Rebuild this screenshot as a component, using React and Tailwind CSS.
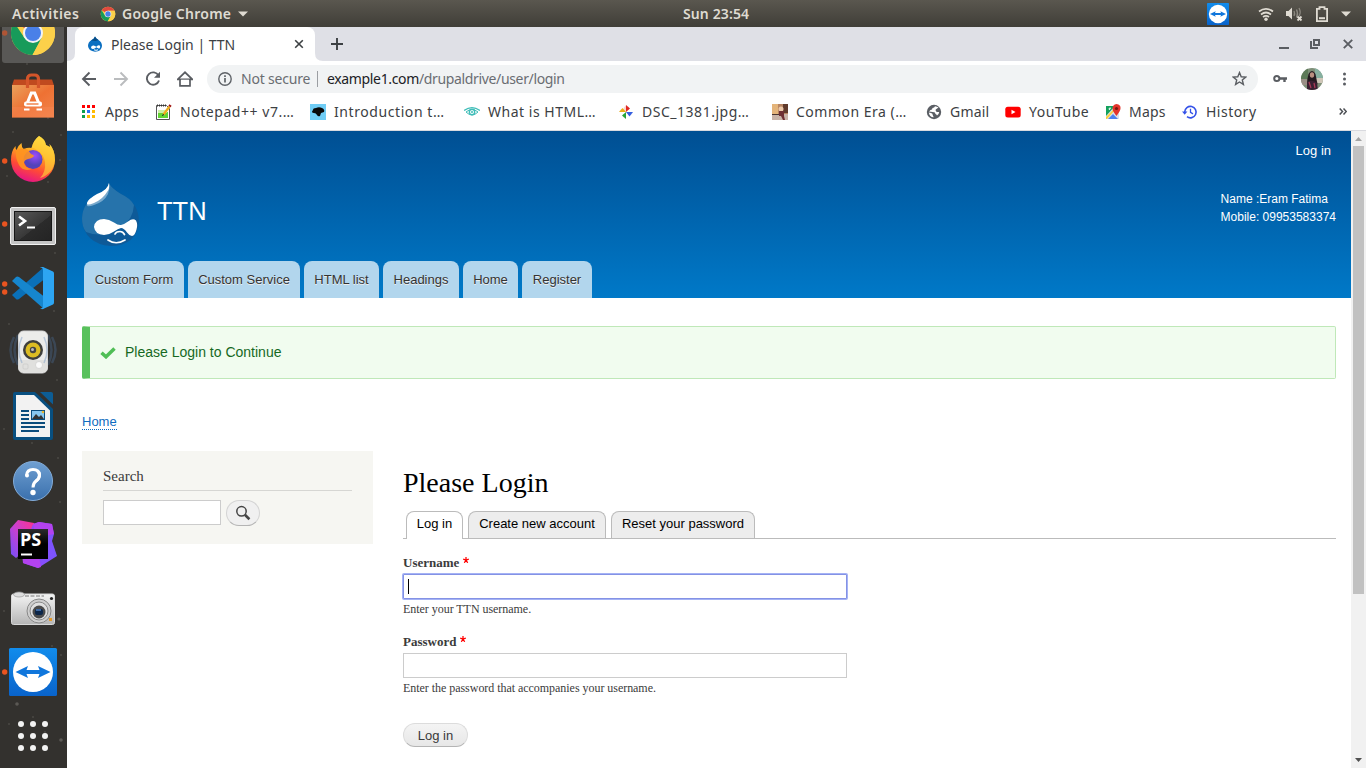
import React from "react";

const ui = "font-['Noto_Sans',sans-serif]";
const sans = "font-['Liberation_Sans',sans-serif]";
const serif = "font-['Liberation_Serif',serif]";

function ChromeLogo({ className }) {
  return (
    <svg viewBox="0 0 48 48" className={className}>
      <circle cx="24" cy="24" r="22" fill="#fcd04a" />
      <path d="M24 24 4.9 13 A22 22 0 0 1 43.1 13 L44 14.500H24z" fill="#e04a3f" />
      <path d="M4.900 13 A22 22 0 0 0 23.500 46 L33 29 24 24 15.500 29z" fill="#179b5a" />
      <path d="M24 14H43.600A22 22 0 0 1 23.500 46L32.500 29z" fill="#fcd04a" />
      <circle cx="24" cy="24" r="10" fill="#f3f3f3" />
      <circle cx="24" cy="24" r="8" fill="#4a80e8" />
    </svg>
  );
}

function TeamViewer({ className }) {
  return (
    <svg viewBox="0 0 48 48" className={className}>
      <defs>
        <linearGradient id="tv" x1="0" y1="0" x2="0" y2="1">
          <stop offset="0" stopColor="#118cec" />
          <stop offset="1" stopColor="#0963cb" />
        </linearGradient>
      </defs>
      <rect width="48" height="48" rx="1.500" fill="url(#tv)" />
      <circle cx="24" cy="24" r="20" fill="#fff" />
      <path d="M6.500 24 19 18l-1.500 4h13L29 18l12.500 6L29 30l1.500-4h-13L19 30z" fill="#0f76dc" />
    </svg>
  );
}

function TopBar() {
  return (
    <header className={`${ui} flex h-[27px] items-center bg-linear-to-b from-[#5a574f] to-[#403e38] text-[14px] font-semibold text-[#dfdbd2]`}>
      <div className="flex w-[683px] items-center pl-3">
        <span className="w-[88px] tracking-[0.500px] whitespace-nowrap">Activities</span>
        <ChromeLogo className="h-4 w-4" />
        <span className="ml-[6px] w-[111px] tracking-[0.260px] whitespace-nowrap">Google Chrome</span>
        <svg className="ml-[5px] h-[6px] w-[10px]" viewBox="0 0 10 6"><path d="M0 .5h10L5 5.500z" fill="#dfdbd2" /></svg>
      </div>
      <div className="tracking-[0.120px] whitespace-nowrap">Sun 23:54</div>
      <div className="flex flex-1 items-center justify-end pr-[15px]">
        <TeamViewer className="mr-[29px] h-[22px] w-[22px]" />
        <svg className="mr-[11px] h-4 w-4" viewBox="0 0 16 16" fill="none" stroke="#dfdbd2" strokeWidth="1.700">
          <path d="M1 5.500Q8 .2 15 5.500M3 8.500Q8 4.500 13 8.500M5 11Q8 8.600 11 11" /><circle cx="8" cy="13.200" r="1.700" fill="#dfdbd2" stroke="none" />
        </svg>
        <svg className="mr-[13px] h-4 w-[18px]" viewBox="0 0 18 16">
          <path d="M1 5h2.500L7 1.500v12L3.500 10H1z" fill="#dfdbd2" />
          <path d="M9 5q1.200 2.500 0 5M11.500 3.500q2 4 0 8M14 2q2.500 4.500 0 8" stroke="#8c8980" fill="none" strokeWidth="1.300" />
          <path d="m12.500 10.500 4 4m0-4-4 4" stroke="#dfdbd2" strokeWidth="1.800" />
        </svg>
        <svg className="mr-[13px] h-4 w-3" viewBox="0 0 12 16" fill="none" stroke="#dfdbd2" strokeWidth="1.800">
          <path d="M3.500 1.200h5v1.600h2.600v12.300H.9V2.800h2.600z" /><path d="M3 12.200h6" strokeWidth="2" />
        </svg>
        <svg className="h-[6px] w-[10px]" viewBox="0 0 10 6"><path d="M0 .5h10L5 5.500z" fill="#dfdbd2" /></svg>
      </div>
    </header>
  );
}

const icon = "h-12 w-12 overflow-visible";

const dock = [
  { dots: [24], active: true, el: <ChromeLogo className={icon} /> },
  {
    el: (
      <svg viewBox="0 0 48 48" className={icon}>
        <defs><linearGradient id="bag" x1="0" y1="0" x2="1" y2="1"><stop stopColor="#eaa15c" /><stop offset=".5" stopColor="#ee7133" /><stop offset="1" stopColor="#f2844c" /></linearGradient></defs>
        <path d="M5 6.500h38l2 6H3z" fill="#c04a1f" />
        <path d="M3 12h42v32.500H3z" fill="url(#bag)" />
        <path d="M3 34h42v10.500H3z" fill="#f58552" opacity=".5" />
        <path d="M18.500 15V6q0-4 4-4h3q4 0 4 4v9" fill="none" stroke="#d4552a" strokeWidth="3.200" />
        <path d="M17.500 32l4.800-12h3.400L30.500 32" fill="none" stroke="#fff" strokeWidth="3" />
        <rect x="15" y="28.500" width="18" height="5" rx="2" fill="#fff" />
        <path d="M17.500 31h12" stroke="#ee7133" strokeWidth="1.300" />
        <path d="M15 36.500h5.500M27.500 36.500h5.500" stroke="#fff" strokeWidth="2.200" />
      </svg>
    ),
  },
  {
    dots: [24],
    el: (
      <svg viewBox="0 0 48 48" className={icon}>
        <defs>
          <linearGradient id="ff" x1=".7" y1="0" x2=".35" y2="1"><stop stopColor="#fff04a" /><stop offset=".4" stopColor="#ffa51f" /><stop offset=".7" stopColor="#ff4b35" /><stop offset="1" stopColor="#e51289" /></linearGradient>
          <radialGradient id="fg" cx=".6" cy=".3"><stop stopColor="#9b4bff" /><stop offset="1" stopColor="#5443b9" /></radialGradient>
        </defs>
        <path d="M30-1q6 3 7 9l4 2q0-2-.5-3Q46 13 46 23A22 22 0 0 1 2 23Q2 14 6.500 9q0 3 1 4 2-5 5-7 0 4 2 6 5-2 8-1 2-8 7.500-12z" fill="url(#ff)" />
        <circle cx="24" cy="22.500" r="9.500" fill="url(#fg)" />
        <path d="M7 13q7-3 12 0l3 4q3 1 3 2-1 2-6 3-4 1-4 4 1 5 8 6-9 3-13-4-4-7-3-15z" fill="#ff9420" opacity=".9" />
        <path d="M30-1q6 3 7 9l4 2-.5-3Q46 13 46 23q-1 8-5 12-5 5-10 6 6-6 5-16-1-8-8-12-4-3-5.500-2 2-8 7.500-12z" fill="#ffd03a" opacity=".65" />
      </svg>
    ),
  },
  {
    dots: [23],
    el: (
      <svg viewBox="0 0 48 48" className={icon}>
        <defs><linearGradient id="tm" x1="0" y1="0" x2="1" y2="1"><stop stopColor="#5a5a5a" /><stop offset=".55" stopColor="#383838" /><stop offset=".56" stopColor="#2b2b2b" /><stop offset="1" stopColor="#242424" /></linearGradient></defs>
        <rect x="1.500" y="6.500" width="45" height="37" rx="1.500" fill="#c4c4c4" stroke="#f1f1f1" />
        <rect x="5.500" y="10.500" width="37" height="29" fill="url(#tm)" stroke="#171717" />
        <path d="m10 15.500 6 4.500-6 4.500" fill="none" stroke="#fff" strokeWidth="2.600" />
        <path d="M18 26.500h8" stroke="#fff" strokeWidth="2" />
      </svg>
    ),
  },
  {
    dots: [19, 27],
    el: (
      <svg viewBox="0 0 48 48" className={icon}>
        <path d="m3 30 4 4q1 1 3 0L35 14.500V2z" fill="#0a70b8" />
        <path d="m3 16 4-4q1-1 3 0l25 19.500V44z" fill="#1686ce" />
        <path d="m34 2 10 4.500q1 .5 1 2v29q0 1.500-1 2L34 44q-2 .5-3-1 3 1 3-2V5q0-3-3-2 1-1.500 3-1z" fill="#2da5f2" />
      </svg>
    ),
  },
  {
    el: (
      <svg viewBox="0 0 48 48" className={icon}>
        <g fill="none" stroke="#4a6c96" strokeWidth="2.500" opacity=".38"><path d="M9 6q-7 15 0 30M5 8q-7 13 0 26M39 6q7 15 0 30M43 8q7 13 0 26" /></g>
        <rect x="9.500" y="2" width="29" height="42" rx="5" fill="#ececea" stroke="#d6d6d6" />
        <path d="M10 31h28v8q0 4-4 4H14q-4 0-4-4z" fill="#e0e0de" />
        <g fill="none" stroke="#6f94c4" strokeWidth="1.500" opacity=".4"><path d="M13 8q-6 13 0 26M35 8q6 13 0 26" /></g>
        <circle cx="24" cy="21" r="10" fill="#3f3f3c" />
        <circle cx="24" cy="21" r="7.500" fill="#dcbc22" />
        <circle cx="24" cy="21" r="3.200" fill="#444" /><circle cx="23.500" cy="20.500" r="1.500" fill="#bbb" />
        <circle cx="30" cy="36" r="3.500" fill="#fafafa" stroke="#c8c8c8" strokeWidth=".6" />
        <rect x="14" y="35" width="5" height="5" rx="1" fill="none" stroke="#c8c8c8" strokeWidth=".7" />
      </svg>
    ),
  },
  {
    el: (
      <svg viewBox="0 0 48 48" className={icon}>
        <path d="M6-1h20l18 17v29q0 2-2 2H6q-2 0-2-2V1q0-2 2-2z" fill="#084f80" />
        <path d="M7 2h18l16 15.500V44H7z" fill="#f2f2f2" />
        <path d="M31-1h11q2 0 2 2v10.500z" fill="#0d5d95" />
        <path d="M12 18h8M12 22h8M12 26h8M12 30h24M12 34h24M12 38h18" stroke="#0b4c7c" strokeWidth="2" />
        <rect x="22.500" y="17.500" width="13" height="9" fill="#88c7ef" stroke="#0b4c7c" />
        <path d="m23 26 4-5 3 3 2-2 3 4z" fill="#333" /><circle cx="34" cy="19" r="1.300" fill="#e9b52c" />
      </svg>
    ),
  },
  {
    el: (
      <svg viewBox="0 0 48 48" className={icon}>
        <defs><linearGradient id="hp" x1="0" y1="0" x2="0" y2="1"><stop stopColor="#6f9fd1" /><stop offset="1" stopColor="#3a70ad" /></linearGradient></defs>
        <circle cx="24" cy="24" r="19.500" fill="url(#hp)" stroke="#83acd8" />
        <path d="M17.500 18.500q.5-6 6.500-6t6.500 5.500q0 3.500-3.500 6-3 2.200-3 6.500" fill="none" stroke="#fff" strokeWidth="3" />
        <path d="M28.500 14q3.500 3 1 7.500-1 1.500-3 3" fill="none" stroke="#fff" strokeWidth="3" />
        <circle cx="18" cy="18.500" r="2" fill="#fff" />
        <circle cx="24" cy="35.500" r="2.700" fill="#fff" />
      </svg>
    ),
  },
  {
    el: (
      <svg viewBox="0 0 48 48" className={icon}>
        <defs>
          <linearGradient id="p1"><stop stopColor="#9a45f5" /><stop offset="1" stopColor="#7955ff" /></linearGradient>
          <linearGradient id="p2" x1="0" y1="1" x2="1" y2="0"><stop stopColor="#6f50fa" /><stop offset=".5" stopColor="#c840d2" /><stop offset="1" stopColor="#ff318c" /></linearGradient>
          <linearGradient id="p3" x1="0" y1="0" x2="0" y2="1"><stop stopColor="#2b2b2e" /><stop offset=".5" stopColor="#000" /></linearGradient>
        </defs>
        <path d="M1 8 9-1l16 3v20L7 37 2 33z" fill="url(#p2)" />
        <path d="m24 3 6-2 13 2 2 10-2 7 5 15-19 12-15-5-1-9z" fill="url(#p1)" />
        <path d="m24 3 6-2 13 2 2 10-18 4zM14 38l16-2 2 10-3 1-15-5z" fill="#b342ef" />
        <rect x="9" y="8" width="30" height="30" fill="url(#p3)" />
        <text x="11" y="25" fill="#fff" className="font-['Open_Sans',sans-serif] text-[18px] font-bold">PS</text>
        <path d="M12 33.500h11" stroke="#fff" strokeWidth="2" />
      </svg>
    ),
  },
  {
    el: (
      <svg viewBox="0 0 48 48" className={icon}>
        <defs><linearGradient id="cm" x1="0" y1="0" x2="0" y2="1"><stop stopColor="#f4f4f4" /><stop offset="1" stopColor="#b5b5b5" /></linearGradient></defs>
        <rect x="2.500" y="9" width="43" height="30.500" rx="2" fill="url(#cm)" stroke="#d8d8d8" />
        <ellipse cx="10" cy="9.500" rx="5.500" ry="2.500" fill="#ddd" stroke="#999" strokeWidth=".7" />
        <path d="M16 11h19" stroke="#777" strokeDasharray="4 1.500" />
        <circle cx="30" cy="26" r="12" fill="#cfcfcf" stroke="#888" />
        <circle cx="30" cy="26" r="9" fill="#e0e0e0" stroke="#8a8a8a" />
        <circle cx="30" cy="27" r="6.500" fill="#4b4b4b" /><rect x="26" y="24" width="8" height="6" rx="2" fill="#0c2649" /><path d="M27 25h5" stroke="#4c7ebf" strokeWidth="1.500" />
        <circle cx="42.500" cy="13.500" r="1.600" fill="#222" /><rect x="40" y="33" width="3" height="3" fill="#e69b2b" />
      </svg>
    ),
  },
  { dots: [23], el: <TeamViewer className={`${icon} -translate-y-[1px]`} /> },
  {
    el: (
      <svg viewBox="0 0 48 48" className={icon} fill="#f2f2f2">
        {[11, 23, 35].map((y) => [12, 24, 36].map((x) => <circle key={`${x}-${y}`} cx={x} cy={y} r="3" />))}
      </svg>
    ),
  },
];

function Dock() {
  return (
    <aside className="relative w-[67px] shrink-0 overflow-hidden bg-[#33312e]">
      <svg className="absolute inset-0 h-full w-full" viewBox="0 0 67 741" fill="#77746e" opacity=".6">
        {[[27, 37], [57, 30], [48, 91], [13, 105], [61, 108], [60, 133], [7, 149], [48, 155], [15, 190], [55, 226], [20, 254], [54, 284], [9, 297], [38, 325], [57, 353], [32, 416], [4, 402], [58, 431], [60, 475], [21, 527], [4, 584], [50, 593], [27, 640], [61, 628], [52, 619], [9, 697], [33, 690], [45, 705]].map(([x, y]) => (
          <circle key={`${x}-${y}`} cx={x} cy={y} r=".8" />
        ))}
        <circle cx="17" cy="677" r="1.800" /><circle cx="61" cy="713" r="1.800" /><circle cx="59" cy="592" r="1.600" />
      </svg>
      <div className="relative -mt-[26px] flex w-[66px] flex-col">
        {dock.map((d, i) => (
          <div key={i} className="relative flex h-16 items-center justify-center">
            {d.active && <span className="absolute inset-x-[2px] top-0 bottom-[2px] rounded-[3px] bg-[#595856]" />}
            <span className="relative">{d.el}</span>
            {d.dots && (
              <svg className="absolute top-2 left-0 h-12 w-2" viewBox="0 0 8 48" fill="#e95420">
                {d.dots.map((y) => <circle key={y} cx="4.700" cy={y} r="2.700" opacity={d.active ? 0.6 : 1} />)}
              </svg>
            )}
          </div>
        ))}
      </div>
    </aside>
  );
}

function DrupalFavicon() {
  return (
    <svg className="h-4 w-4" viewBox="0 0 16 16">
      <path d="M8 .5q1 2 3.500 3.500 3.500 2.200 3.500 6Q14.500 15.500 8 15.700 1.500 15 1 10q0-4 3.500-6Q7.500 2.500 8 .5z" fill="#0b6fc1" />
      <path d="M8 .5q1 2 3.500 3.500L8.500 5 4 4.500Q7.500 2.500 8 .5z" fill="#064c86" />
      <path d="M4 11.200q.5-2 2.600-1.800Q8 9.500 9.300 10.700q2.200-1.900 3.400-1.200 1.100 1 0 2.700-.6.800-1.600 0L9.300 11.300q-2 2-3.500 1.700-1.700-.3-1.800-1.800z" fill="#fff" />
      <path d="M7 13.800q2 1 4 0" stroke="#fff" fill="none" />
    </svg>
  );
}

function TabStrip() {
  return (
    <div className={`${ui} flex h-[34px] items-stretch bg-[#dfe0e6] text-[#3c4043]`}>
      <svg className="h-[34px] w-2" viewBox="0 0 8 34"><path d="M8 26v8H0q8 0 8-8z" fill="#fff" /></svg>
      <div className="flex w-[240px] items-center rounded-t-lg bg-white pl-3">
        <DrupalFavicon />
        <span className="ml-2 w-[178px] text-[14px] whitespace-nowrap">Please Login | TTN</span>
        <svg className="ml-[5px] h-[10px] w-[10px]" viewBox="0 0 10 10"><path d="m1.200 1.200 7.600 7.600m0-7.600L1.200 8.800" stroke="#3c4043" strokeWidth="1.600" /></svg>
      </div>
      <svg className="h-[34px] w-2" viewBox="0 0 8 34"><path d="M0 26v8h8q-8 0-8-8z" fill="#fff" /></svg>
      <div className="flex flex-1 items-center pl-2">
        <svg className="h-3 w-3" viewBox="0 0 12 12"><path d="M6 0v12M0 6h12" stroke="#3c4043" strokeWidth="1.900" /></svg>
      </div>
      <div className="flex items-center gap-[22px] pr-[13px]">
        <svg className="-mr-px h-[10px] w-[10px]" viewBox="0 0 10 10"><path d="M0 9h10" stroke="#5a5d62" strokeWidth="2" /></svg>
        <svg className="mr-px h-[10px] w-[10px]" viewBox="0 0 10 10" fill="none" stroke="#5a5d62" strokeWidth="2"><path d="M4 1h5v5H4z" /><path d="M1 2v7h7" /></svg>
        <svg className="h-[10px] w-[10px]" viewBox="0 0 10 10"><path d="m.8.8 8.400 8.400m0-8.400L.8 9.200" stroke="#5a5d62" strokeWidth="1.900" /></svg>
      </div>
    </div>
  );
}

function Toolbar() {
  return (
    <div className={`${ui} flex h-[35px] items-center pl-[14px] text-[14px]`}>
      <div className="flex items-center gap-4">
        <svg className="h-4 w-4" viewBox="0 0 16 16" fill="none" stroke="#5a5d62" strokeWidth="1.900"><path d="M15 8H2M8.500 1.500 2 8l6.500 6.500" /></svg>
        <svg className="h-4 w-4" viewBox="0 0 16 16" fill="none" stroke="#babcbe" strokeWidth="1.900"><path d="M1 8h13M7.500 1.500 14 8l-6.500 6.500" /></svg>
        <svg className="h-4 w-4" viewBox="0 0 16 16" fill="none" stroke="#5a5d62" strokeWidth="1.900"><path d="M13.500 4.500A6.200 6.200 0 1 0 14 9.500" /><path d="M15 .8v6H9z" fill="#5a5d62" stroke="none" /></svg>
        <svg className="h-4 w-4" viewBox="0 0 16 16" fill="none" stroke="#5a5d62" strokeWidth="1.900"><path d="M3 7.500v7.300h10V7.500M.7 8.300 8 1.300l7.300 7z" strokeWidth="1.700" /><path d="M4 8.700h8v5H4z" fill="#fff" stroke="none" /></svg>
      </div>
      <div className="ml-[14px] flex h-7 w-[1051px] items-center rounded-full bg-[#f1f3f4] pl-[11px] text-[#6a6d72]">
        <svg className="h-[14px] w-[14px]" viewBox="0 0 14 14" fill="none" stroke="#5f6368" strokeWidth="1.400"><circle cx="7" cy="7" r="6.200" /><path d="M7 6v4.500M7 3.300v1.600" strokeWidth="1.700" /></svg>
        <span className="ml-[9px] w-[76px] tracking-[-0.200px] whitespace-nowrap">Not secure</span>
        <span className="h-4 w-px bg-[#9b9ea2]" />
        <span className="ml-[9px] w-[900px] tracking-[-0.350px] whitespace-nowrap"><span className="text-[#202124]">example1.com</span>/drupaldrive/user/login</span>
        <svg className="ml-[5px] h-[15px] w-[15px] shrink-0" viewBox="0 0 15 15"><path d="m7.500 1.600 1.700 4.200 4.600.3-3.500 2.900 1.100 4.400-3.900-2.400-3.900 2.400L4.700 9 1.200 6.100l4.600-.3z" fill="none" stroke="#5a5d62" strokeWidth="1.400" /></svg>
      </div>
      <svg className="ml-[15px] h-[14px] w-[14px]" viewBox="0 0 14 14" fill="none" stroke="#5a5d62" strokeWidth="2"><circle cx="3.800" cy="6.500" r="2.600" /><path d="M6.500 6.500H14M11.500 6.500v3.500" strokeWidth="2.400" /></svg>
      <svg className="ml-[14px] h-[22px] w-[22px]" viewBox="0 0 22 22">
        <clipPath id="av"><circle cx="11" cy="11" r="11" /></clipPath>
        <g clipPath="url(#av)">
          <path d="M0 0h22v22H0z" fill="#7e8f78" /><path d="M0 0h7v11H0z" fill="#5d7a58" /><path d="M14 0h8v10h-8z" fill="#86b0a0" /><path d="M15 10h7v5h-7z" fill="#d0c6b8" /><path d="M0 11h6v6H0z" fill="#9a8f86" />
          <path d="M7.500 6q3.500-6 7 0l2 10q-2 5-9 5-3-4 0-15z" fill="#251a20" /><ellipse cx="11" cy="7" rx="2.200" ry="2.800" fill="#b98f80" /><path d="M6 14q5-3 10 1l1 7H6z" fill="#3a2031" /><path d="m8 14 2 6m3-5 1 5" stroke="#a63a55" strokeWidth="1.300" />
        </g>
      </svg>
      <svg className="ml-5 h-[14px] w-[3px]" viewBox="0 0 3 14" fill="#5a5d62"><circle cx="1.500" cy="2" r="1.500" /><circle cx="1.500" cy="7" r="1.500" /><circle cx="1.500" cy="12" r="1.500" /></svg>
    </div>
  );
}

const bi = "h-4 w-4 shrink-0";
const bookmarks = [
  {
    w: "w-[75px]", t: "tracking-[0.250px]", label: "Apps",
    el: (
      <svg className={bi} viewBox="0 0 16 16">
        {["#f00", "#f00", "#f00", "#0ca04d", "#2a72f5", "#fb0", "#0ca04d", "#fb0", "#fb0"].map((c, i) => <rect key={i} x={1 + (i % 3) * 5} y={1 + Math.floor(i / 3) * 5} width="3" height="3" fill={c} />)}
      </svg>
    ),
  },
  {
    w: "w-[154px]", t: "tracking-[0.550px]", label: "Notepad++ v7.…",
    el: (
      <svg className={bi} viewBox="0 0 16 16">
        <path d="M.5 1.500h10l3 3v11H.5z" fill="#fff" stroke="#555" /><path d="M2 8h10v6H2z" fill="#62d433" /><path d="M2 6h9v3H2z" fill="#ccefa4" />
        <path d="M1 1.500h10" stroke="#333" strokeDasharray="1 1" strokeWidth="2" /><path d="m7.500 10.500 6-8" stroke="#f0ad1b" strokeWidth="2.400" /><path d="m13.500 2.500 1-1.500" stroke="#a01212" strokeWidth="2.600" /><path d="m6.500 12 1-2" stroke="#222" />
      </svg>
    ),
  },
  {
    w: "w-[154px]", t: "tracking-[0.580px]", label: "Introduction t…",
    el: <svg className={bi} viewBox="0 0 16 16"><path d="M0 0h16v16H0z" fill="#70cdf5" /><path d="M3 6q0-2 3-2 3-1.500 6 0 3 1.500 2 4l-3 1-1 3q-2 1-3-1-1-2-3-2-2 0-2-1.500z" fill="#080808" /></svg>,
  },
  {
    w: "w-[154px]", t: "tracking-[0.520px]", label: "What is HTML…",
    el: <svg className={bi} viewBox="0 0 16 16" fill="none" stroke="#3fbdb8"><path d="M0 6.500Q8 .8 16 6.500" strokeWidth="1.300" /><path d="M2 8q6-5 12 0-6 6-12 0z" /><circle cx="8" cy="8" r="2.700" strokeWidth="1.400" /><circle cx="8" cy="8" r=".7" /></svg>,
  },
  {
    w: "w-[154px]", t: "tracking-[0.520px]", label: "DSC_1381.jpg…",
    el: <svg className={bi} viewBox="0 0 16 16"><path d="M8 1l4 3.500L8 8z" fill="#ee2a24" /><path d="M8 1v7H4.500Q5 3.500 8 1z" fill="#f4584c" opacity=".25" /><path d="M15 8l-3.500 4.500L8 8z" fill="#3a66f0" /><path d="M8 15l-4-3.500L8 8z" fill="#2ab03e" /><path d="M1 8l3.500-4L8 8z" fill="#fbb917" /><path d="M8 8V1q3.500 1 3.500 4zM8 8h7q-1 3.500-4 3.500zM8 8v7q-3.500-1-3.500-4zM8 8H1q1-3.500 4-3.500z" fill="#000" opacity=".06" /></svg>,
  },
  {
    w: "w-[154px]", t: "tracking-[0.500px]", label: "Common Era (…",
    el: <svg className={bi} viewBox="0 0 16 16"><path d="M0 0h16v16H0z" fill="#b88563" /><path d="M0 0h6v10H0z" fill="#e4b47a" /><path d="M11 0h5v9h-5z" fill="#613b2c" /><path d="M0 10h16v6H0z" fill="#c9b4a8" /><circle cx="9" cy="5" r="2.500" fill="#ecc9aa" /><path d="M7 7h5v5l1 4h-2l-2-4H7z" fill="#6f3034" /><path d="M0 10.500h7" stroke="#493530" /></svg>,
  },
  {
    w: "w-[79px]", t: "tracking-[0.200px]", label: "Gmail",
    el: <svg className={bi} viewBox="0 0 16 16"><circle cx="8" cy="8" r="7.200" fill="#5a5e64" /><path d="M9 2.300q-.5 1.700-2.500 1.700 0 2-2 2L3 7.500l3.500.5q3-.2 3 2 1 0 1.500 1.500 2-1.500 2.200-3.500h-2.500q-1.500-1.500-1-2.500l2.800-2Q11 2.500 9 2.300z" fill="#fff" /><path d="M2.800 8.500 5 9q2 .5 1.700 2l1 2.300Q3.500 13 2.800 8.500z" fill="#fff" /></svg>,
  },
  {
    w: "w-[100px]", t: "tracking-[0.520px]", label: "YouTube",
    el: <svg className={bi} viewBox="0 0 16 16"><rect x=".3" y="2.700" width="15.400" height="10.700" rx="2.500" fill="#f00" /><path d="m6.500 5.800 4 2.200-4 2.300z" fill="#fff" /></svg>,
  },
  {
    w: "w-[77px]", t: "tracking-[0.200px]", label: "Maps",
    el: <svg className={bi} viewBox="0 0 16 16"><path d="M1 2h13v13H1z" fill="#dde2e6" /><path d="M1 2h9L1 12z" fill="#14a15d" /><path d="m3 15 5-5 5 5z" fill="#4c82ee" /><path d="m1 13 8-8 1 1-8 9H1z" fill="#fbd23c" /><path d="M11.500 0Q16 .5 15.500 4.500q0 2-4 7.500-4-5-4-7.500Q7.500.5 11.500 0z" fill="#e3342b" /><circle cx="11.500" cy="4.500" r="1.600" fill="#7a1710" /><path d="M6 4.200H4.200v1.300h.9" stroke="#fff" fill="none" /></svg>,
  },
  {
    w: "w-[150px]", t: "tracking-[0.480px]", label: "History",
    el: <svg className={bi} viewBox="0 0 16 16" fill="none" stroke="#3452e8" strokeWidth="1.600"><path d="M2.700 8A5.700 5.700 0 1 1 5 12.700" /><path d="M8.500 4.800v3.600l2.500 1.500" strokeWidth="1.300" /><path d="M0 7.500h5.400L2.700 10.800z" fill="#3452e8" stroke="none" /></svg>,
  },
];

function Bookmarks() {
  return (
    <div className={`${ui} flex h-[35px] items-center border-b border-[#d9dadf] pb-[3px] pl-[14px] text-[14px] text-[#3c4043]`}>
      {bookmarks.map((b) => (
        <div key={b.label} className={`${b.w} flex shrink-0 items-center gap-2 whitespace-nowrap`}>
          {b.el}
          <span className={b.t}>{b.label}</span>
        </div>
      ))}
      <svg className="ml-[7px] h-[7px] w-2" viewBox="0 0 8 7" fill="none" stroke="#4b4e53" strokeWidth="1.500"><path d="m.7.5 2.800 3-2.800 3M4.500.5l2.800 3-2.800 3" /></svg>
    </div>
  );
}

function DrupalLogo() {
  return (
    <svg className="h-[65px] w-[58px]" viewBox="0 0 58 65">
      <path d="M27 1q2 5 12 11 18 9 18 28Q55 63 29 64 2 62 0 37 1 20 15 13 26 8 27 1z" fill="#0e5a98" />
      <path d="M27 1q2 5 12 11 9 4 13 11-1 15-13 22Q22 57 4 50 0 45 0 36 1 20 15 13 26 8 27 1z" fill="#2673ab" />
      <path d="M27 1q1 6-1 11-4 8-14 11-8 3-7-1Q6 17 15 13 26 8 27 1z" fill="#78a9cd" />
      <path d="M27 1q1 6-2 9-4 7-13 11-8 3-7 0Q6 17 15 12 26 8 27 1z" fill="#fff" />
      <path d="M12 45Q13 37 22 37q5 0 10 3.500 4 2.800 7 2.500 3-.5 7-3.500 5-4 8-1 2 4 .5 9Q53 53.500 50 54q-2.500 0-5-3.500Q42 46 39 46q-3 .5-7 3.500-5 3.500-10 3.500-9-.5-10-8z" fill="#fff" />
      <path d="M33 52q1-2.500 5-2.500 3 0 4.500 3M26 58q8 5.500 17 0" fill="none" stroke="#fff" strokeWidth="1.700" strokeLinecap="round" />
    </svg>
  );
}

const nav = [["Custom Form", "w-[100px]"], ["Custom Service", "w-[112px]"], ["HTML list", "w-[75px]"], ["Headings", "w-[76px]"], ["Home", "w-[55px]"], ["Register", "w-[70px]"]];

function SiteHeader() {
  return (
    <div className={`${sans} flex h-[167px] flex-col bg-linear-to-b from-[#004f93] to-[#0079c8] px-[15px] text-white`}>
      <div className="flex h-[40px] justify-end pt-[11px] pr-[5px] text-[13px] leading-[18px]">Log in</div>
      <div className="flex h-[90px] items-start">
        <div className="pt-[11px]"><DrupalLogo /></div>
        <div className="flex-1 pt-[24px] pl-[17px] text-[25.500px] leading-8">TTN</div>
        <div className="pt-[19px] text-[12px] leading-[18px]"><div>Name :Eram Fatima</div><div>Mobile: 09953583374</div></div>
      </div>
      <nav className="flex gap-1 pl-[2px] text-[13px] text-[#333]">
        {nav.map(([t, w]) => <div key={t} className={`${w} flex h-[37px] items-center justify-center rounded-t-lg bg-[#b2d6ed] whitespace-nowrap [text-shadow:0_1px_0_#eee]`}>{t}</div>)}
      </nav>
    </div>
  );
}

function Label({ children }) {
  return (
    <label className="flex h-[18px] items-start text-[13px] leading-[18px] font-bold text-[#3b3b3b]">
      {children}
      <svg className="mt-[3px] ml-[4px] h-[6px] w-[6px]" viewBox="0 0 6 6"><path d="M3 0v3.200M.2 2.200 3 3.200l2.800-1M1.300 5.800 3 3.200l1.700 2.600" stroke="#f00" strokeWidth="1.250" fill="none" /></svg>
    </label>
  );
}

function Page() {
  return (
    <div className="flex flex-1 flex-col bg-white">
      <SiteHeader />
      <div className="px-[15px] pt-7">
        <div className={`${sans} flex h-[53px] items-center rounded-[2px] border border-l-8 border-[#bfe8b8] border-l-[#59c15d] bg-[#f1fcef] pl-[10px] text-[14px] text-[#16691f]`}>
          <svg className="h-[12px] w-[16px]" viewBox="0 0 16 12"><path d="m1.500 5.800 4.500 4L14.500 1.500" fill="none" stroke="#50be56" strokeWidth="3.500" /></svg>
          <span className="ml-[9px]">Please Login to Continue</span>
        </div>
        <div className={`${sans} mt-[35px] flex h-[37px] items-start text-[13px] leading-[15px] text-[#0f6cc0]`}><a className="border-b border-dotted border-[#0f6cc0]">Home</a></div>
        <div className="flex items-start gap-[30px]">
          <section className={`${serif} h-[93px] w-[291px] shrink-0 bg-[#f6f6f2] px-[21px] pt-4`}>
            <h2 className="h-6 border-b border-[#d6d6d3] text-[15px] leading-[18px] text-[#3b3b3b]">Search</h2>
            <div className="mt-[9px] flex gap-[5px]">
              <div className="h-[25px] w-[118px] border border-[#ccc] bg-white" />
              <div className="flex h-[26px] w-[34px] items-center justify-center rounded-full border border-[#d4d4d4] border-b-[#b4b4b4] bg-[#f0f0f0] pr-px pb-px">
                <svg className="h-4 w-4" viewBox="0 0 16 16" fill="none" stroke="#454545"><circle cx="6.500" cy="6.300" r="4.700" strokeWidth="1.500" /><path d="m9.900 9.800 4.500 4.400" strokeWidth="2.600" /></svg>
              </div>
            </div>
          </section>
          <main className={`${serif} flex-1 text-[#3b3b3b]`}>
            <h1 className="h-[60px] pt-4 text-[28px] leading-8 text-black">Please Login</h1>
            <div className={`${sans} flex h-7 gap-[5px] border-b border-[#bbb] pl-[3px] text-[13px] leading-[24px] text-black`}>
              <div className="h-7 w-[57px] rounded-t-lg border border-b-0 border-[#bbb] bg-white text-center">Log in</div>
              <div className="h-[27px] w-[138px] rounded-t-lg border border-b-0 border-[#bbb] bg-[#ededed] text-center">Create new account</div>
              <div className="h-[27px] w-[144px] rounded-t-lg border border-b-0 border-[#bbb] bg-[#ededed] text-center">Reset your password</div>
            </div>
            <div className="pt-[15px]">
              <Label>Username</Label>
              <div className="mt-[2px] flex h-[25px] w-[444px] items-center rounded-[1px] border border-[#8492e5] bg-white pl-1 ring-1 ring-[#a5b3f5]"><span className="h-[15px] w-px bg-black" /></div>
              <p className="mt-[2px] text-[12px] leading-4 tracking-[-0.040px]">Enter your TTN username.</p>
              <div className="h-4" />
              <Label>Password</Label>
              <div className="mt-[2px] h-[25px] w-[444px] border border-[#ccc] bg-white" />
              <p className="mt-[2px] text-[12px] leading-4 tracking-[-0.040px]">Enter the password that accompanies your username.</p>
              <button className={`${sans} mt-[27px] block h-6 w-[65px] rounded-full border border-[#dcdcdc] border-b-[#b4b4b4] bg-linear-to-b from-[#f4f4f4] to-[#e7e7e7] pt-[2px] text-[13px] leading-[20px] text-[#3a3a3a]`}>Log in</button>
            </div>
          </main>
        </div>
      </div>
    </div>
  );
}

function ScrollBar() {
  return (
    <div className="flex w-[15px] flex-col items-center bg-[#f1f1f1]">
      <svg className="h-[15px] w-[15px] shrink-0" viewBox="0 0 15 15"><path d="m4 10 3.500-4L11 10z" fill="#a3a3a3" /></svg>
      <div className="h-[448px] w-[11px] bg-[#c1c1c1]" />
      <svg className="mt-auto h-[15px] w-[15px] shrink-0" viewBox="0 0 15 15"><path d="m4 5 3.500 4L11 5z" fill="#505050" /></svg>
    </div>
  );
}

export default function App() {
  return (
    <div className="flex h-[768px] w-[1366px] flex-col overflow-hidden bg-white">
      <TopBar />
      <div className="flex h-[741px]">
        <Dock />
        <div className="flex flex-1 flex-col">
          <TabStrip />
          <Toolbar />
          <Bookmarks />
          <div className="flex h-[637px]">
            <Page />
            <ScrollBar />
          </div>
        </div>
      </div>
    </div>
  );
}
